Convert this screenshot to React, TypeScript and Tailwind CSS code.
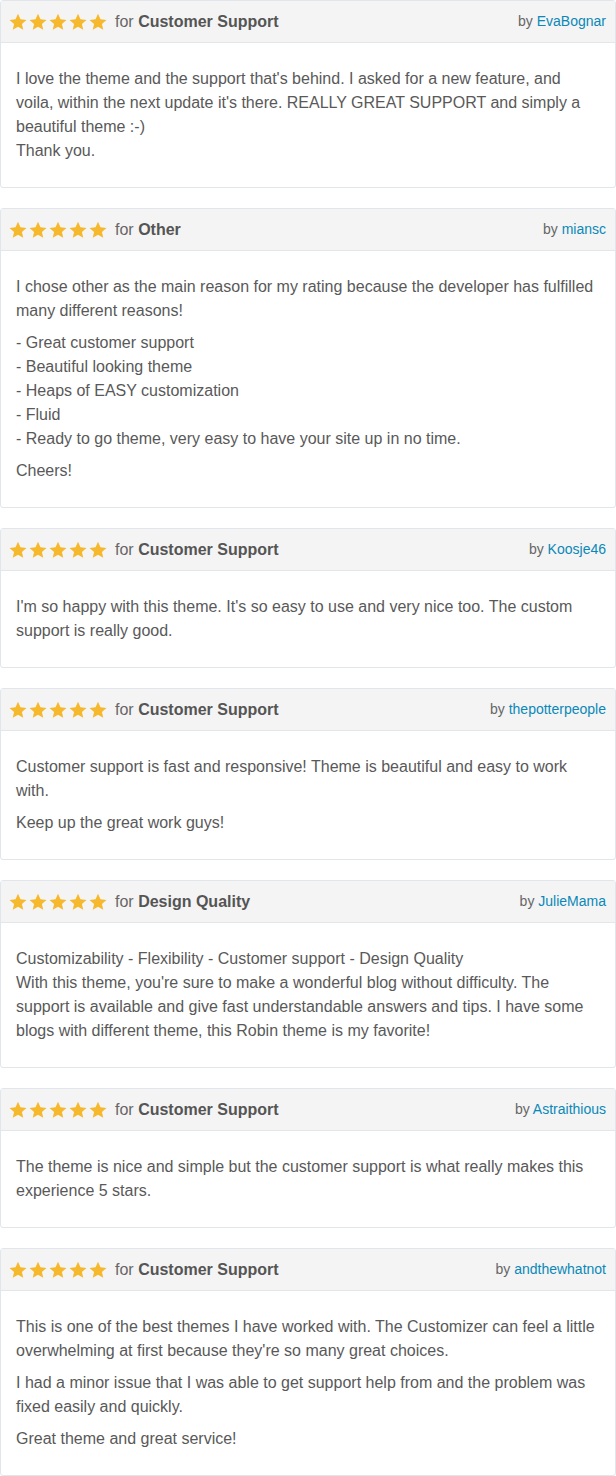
import React from "react";

type Review = {
  category: string;
  author: string;
  body: React.ReactNode[];
};

const Star = () => (
  <svg width="20" height="20" viewBox="0 0 24 24" className="block">
    <path
      d="M12 2.2l2.95 6.6 7.2.7-5.45 4.8 1.6 7.05L12 17.6l-6.3 3.75 1.6-7.05L1.85 9.5l7.2-.7z"
      fill="#f6b82c"
    />
  </svg>
);

const reviews: Review[] = [
  {
    category: "Customer Support",
    author: "EvaBognar",
    body: [
      <p key="a">
        I love the theme and the support that's behind. I asked for a new feature, and voila, within the next update it's there. REALLY GREAT SUPPORT and simply a beautiful theme :-)
        <br />
        Thank you.
      </p>,
    ],
  },
  {
    category: "Other",
    author: "miansc",
    body: [
      <p key="a">I chose other as the main reason for my rating because the developer has fulfilled many different reasons!</p>,
      <p key="b">
        - Great customer support
        <br />- Beautiful looking theme
        <br />- Heaps of EASY customization
        <br />- Fluid
        <br />- Ready to go theme, very easy to have your site up in no time.
      </p>,
      <p key="c">Cheers!</p>,
    ],
  },
  {
    category: "Customer Support",
    author: "Koosje46",
    body: [
      <p key="a">I'm so happy with this theme. It's so easy to use and very nice too. The custom support is really good.</p>,
    ],
  },
  {
    category: "Customer Support",
    author: "thepotterpeople",
    body: [
      <p key="a">Customer support is fast and responsive! Theme is beautiful and easy to work with.</p>,
      <p key="b">Keep up the great work guys!</p>,
    ],
  },
  {
    category: "Design Quality",
    author: "JulieMama",
    body: [
      <p key="a">
        Customizability - Flexibility - Customer support - Design Quality
        <br />
        With this theme, you're sure to make a wonderful blog without difficulty. The support is available and give fast understandable answers and tips. I have some blogs with different theme, this Robin theme is my favorite!
      </p>,
    ],
  },
  {
    category: "Customer Support",
    author: "Astraithious",
    body: [
      <p key="a">The theme is nice and simple but the customer support is what really makes this experience 5 stars.</p>,
    ],
  },
  {
    category: "Customer Support",
    author: "andthewhatnot",
    body: [
      <p key="a">This is one of the best themes I have worked with. The Customizer can feel a little overwhelming at first because they're so many great choices.</p>,
      <p key="b">I had a minor issue that I was able to get support help from and the problem was fixed easily and quickly.</p>,
      <p key="c">Great theme and great service!</p>,
    ],
  },
];

function Card({ r }: { r: Review }) {
  return (
    <div className="border border-[#e1e6ec] rounded-[3px] bg-white overflow-hidden">
      <div className="h-[42px] bg-[#f4f4f4] border-b border-[#e1e6ec] flex items-center justify-between pl-[7px] pr-[9px]">
        <div className="flex items-center">
          <div className="flex items-center">
            <Star />
            <Star />
            <Star />
            <Star />
            <Star />
          </div>
          <span className="ml-[7px] text-[16px] text-[#666]">
            for <b className="font-bold text-[#555]">{r.category}</b>
          </span>
        </div>
        <span className="text-[14px] text-[#666]">
          by <span className="text-[#0a88b8]">{r.author}</span>
        </span>
      </div>
      <div className="px-[15px] py-[24px] text-[16px] leading-[24px] text-[#595959] flex flex-col gap-[8px]">
        {r.body}
      </div>
    </div>
  );
}

export default function App() {
  return (
    <div
      className="w-[616px] bg-white flex flex-col gap-[20px]"
      style={{ fontFamily: '"Liberation Sans", Arial, sans-serif' }}
    >
      {reviews.map((r, i) => (
        <Card key={i} r={r} />
      ))}
    </div>
  );
}
